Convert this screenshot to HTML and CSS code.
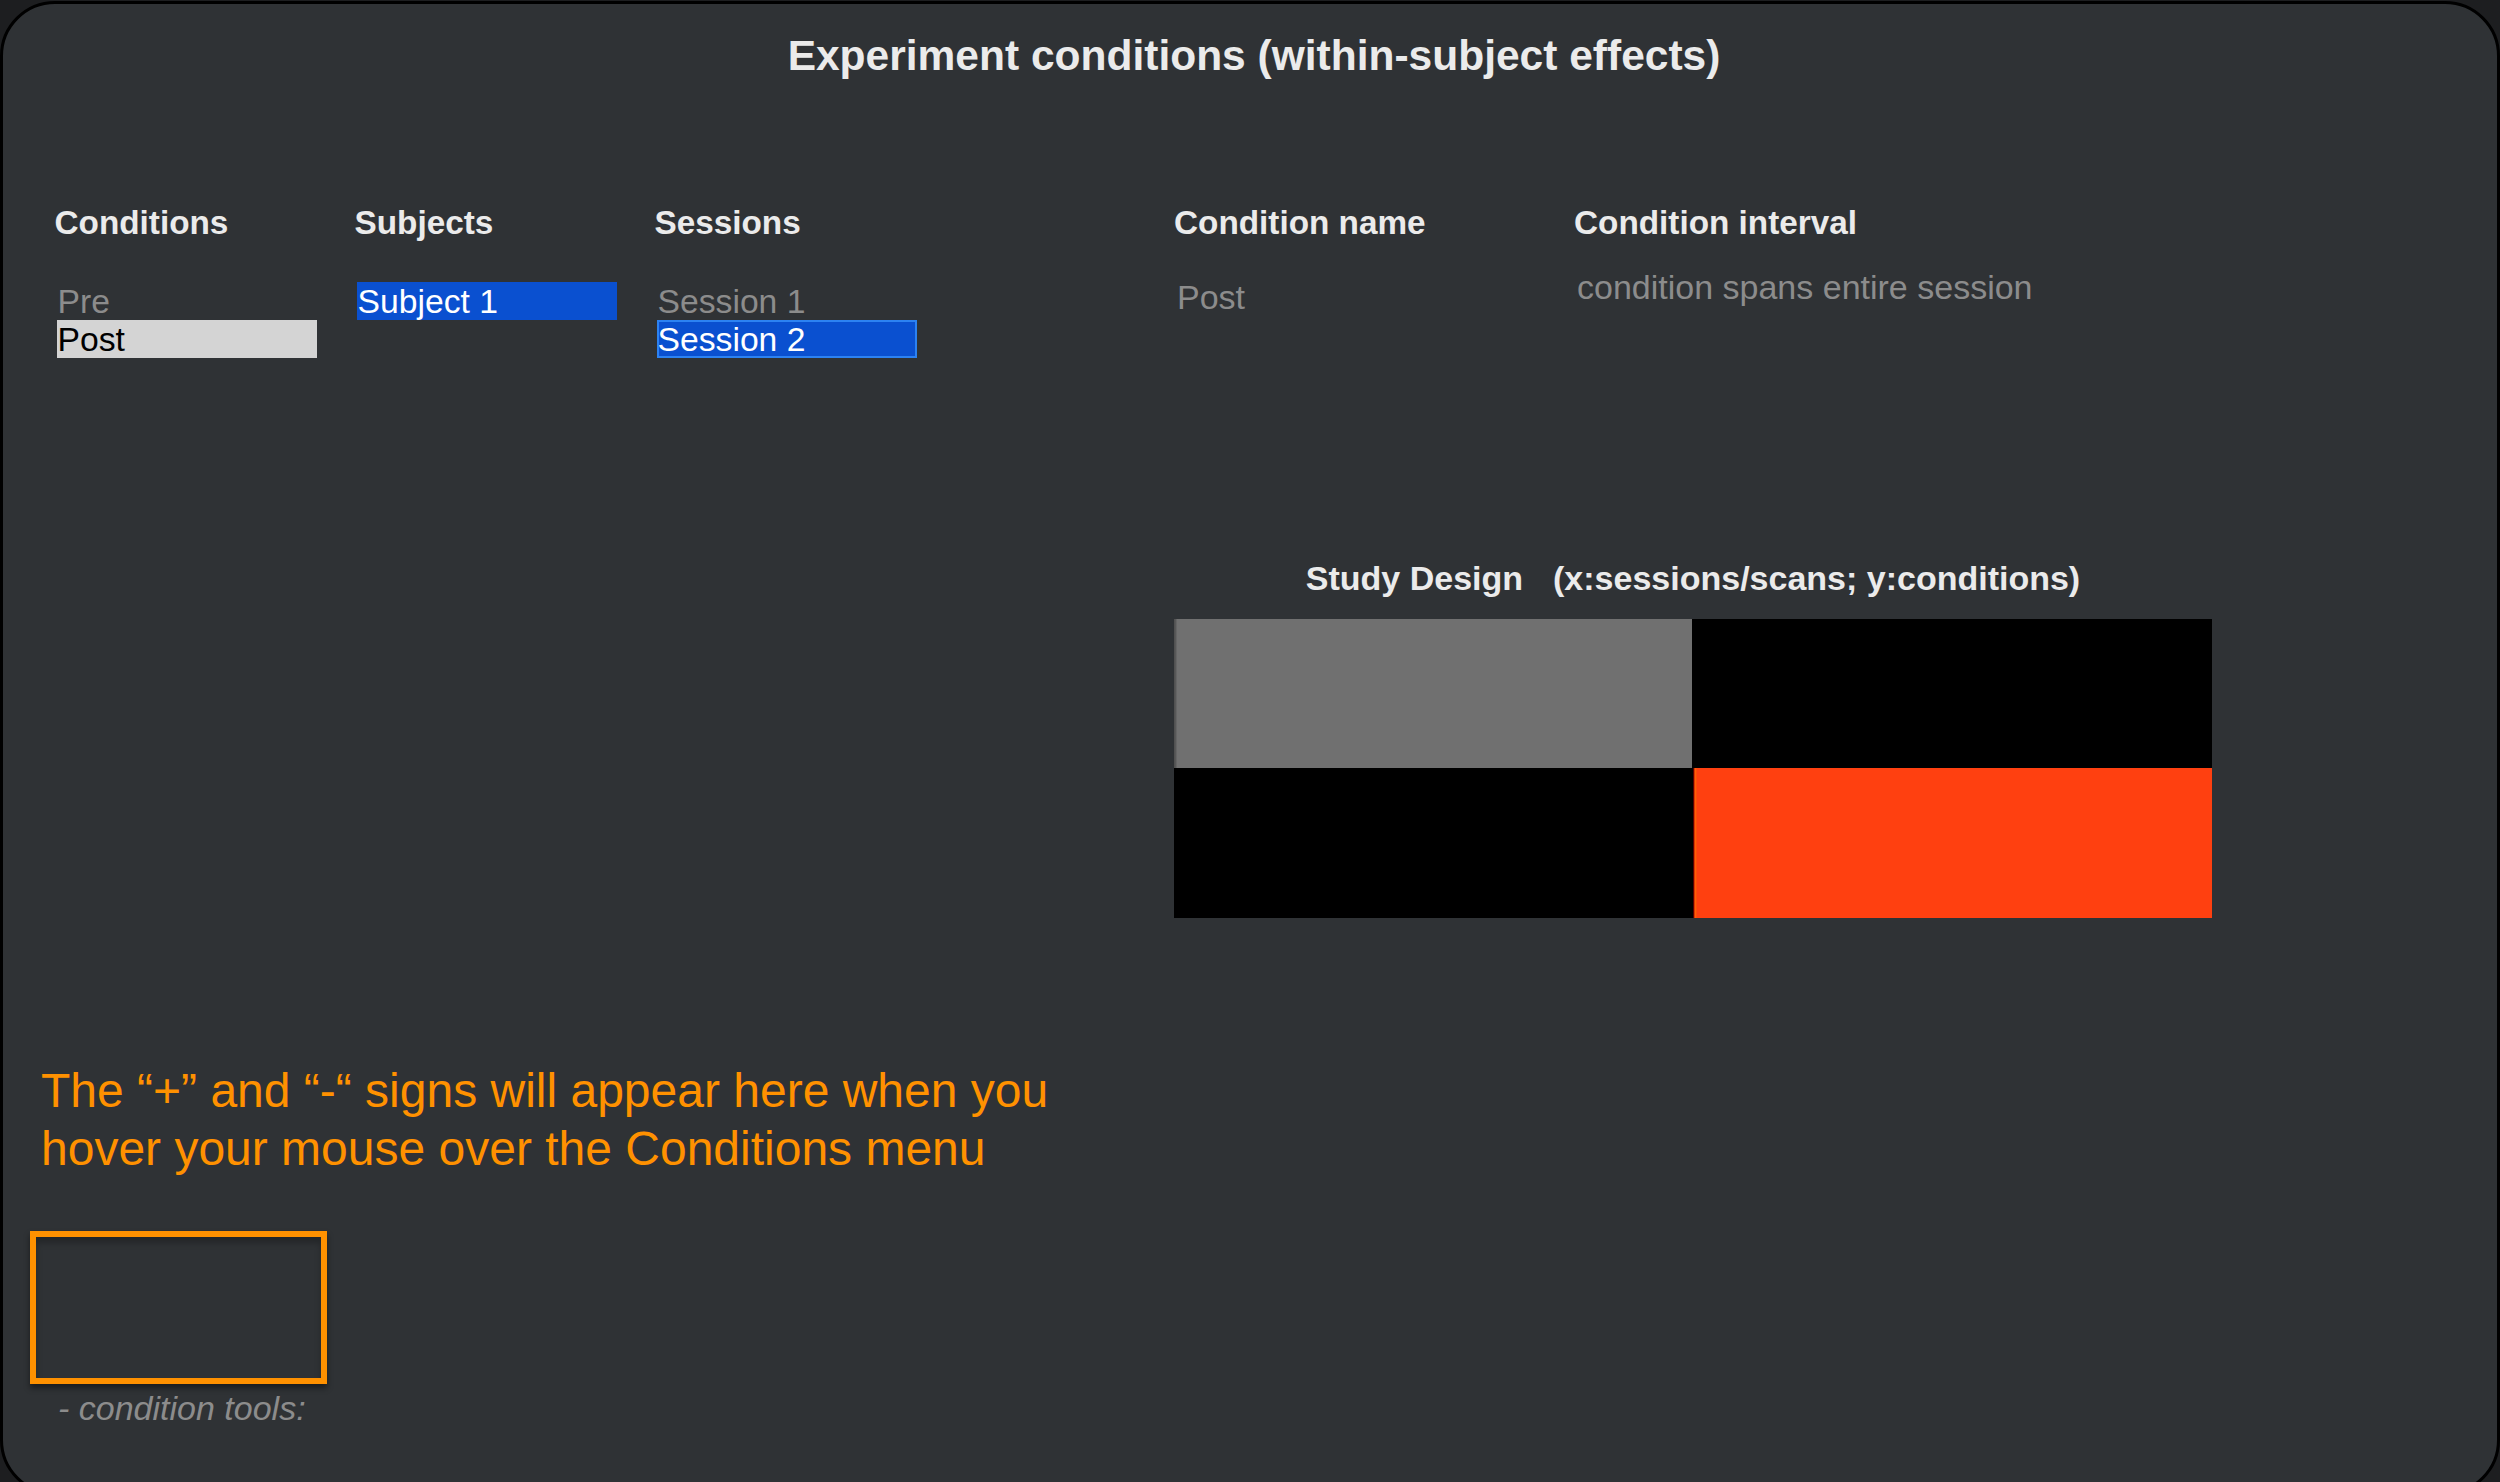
FILE: index.html
```html
<!DOCTYPE html>
<html lang="en">
<head>
<meta charset="utf-8">
<title>Experiment conditions</title>
<link rel="stylesheet" href="styles.css">
</head>
<body>
<div class="window">
  <h1 class="title">Experiment conditions (within-subject effects)</h1>
  <div class="body">
    <div class="left">
      <div class="lists">
        <div class="list-col">
          <h2 class="heading">Conditions</h2>
          <div class="item">Pre</div>
          <div class="item item-active">Post</div>
        </div>
        <div class="list-col">
          <h2 class="heading">Subjects</h2>
          <div class="item item-selected">Subject 1</div>
        </div>
        <div class="list-col">
          <h2 class="heading">Sessions</h2>
          <div class="item">Session 1</div>
          <div class="item item-selected item-focus">Session 2</div>
        </div>
      </div>
      <p class="hint">The “+” and “-“ signs will appear here when you<br>hover your mouse over the Conditions menu</p>
      <div class="tools-box"></div>
      <div class="tools-label">- condition tools:</div>
    </div>
    <div class="right">
      <div class="fields">
        <div class="field field-name">
          <h2 class="heading">Condition name</h2>
          <div class="value value-name">Post</div>
        </div>
        <div class="field field-interval">
          <h2 class="heading">Condition interval</h2>
          <div class="value value-interval">condition spans entire session</div>
        </div>
      </div>
      <div class="design">
        <div class="design-title"><span>Study Design</span><span>(x:sessions/scans; y:conditions)</span></div>
        <div class="design-grid">
          <div class="cell cell-gray"></div>
          <div class="cell cell-black"></div>
          <div class="cell cell-black"></div>
          <div class="cell cell-red"></div>
        </div>
      </div>
    </div>
  </div>
</div>
</body>
</html>
```
FILE: styles.css
```css
* { box-sizing: border-box; }
html, body { margin: 0; padding: 0; }
body {
  background: #1d1e20;
  font-family: "Liberation Sans", Arial, sans-serif;
  width: 2500px;
  height: 1482px;
  overflow: hidden;
}
.window {
  margin-top: 1px;
  width: 2500px;
  height: 1494px;
  border: 3px solid #000;
  border-radius: 55px;
  background: #2f3235;
  display: flex;
  flex-direction: column;
}
.title {
  margin: 0;
  padding: 28px 0 0 8px;
  font-size: 42.5px;
  line-height: 48px;
  font-weight: bold;
  color: #ebebeb;
  text-align: center;
  white-space: nowrap;
}
.body {
  display: flex;
  padding-top: 124px;
}
.left {
  width: 1171px;
  flex: none;
  display: flex;
  flex-direction: column;
}
.lists {
  display: flex;
  margin-left: 51.5px;
}
.list-col {
  width: 300px;
}
.heading {
  margin: 0 0 40px 0;
  font-size: 33.3px;
  line-height: 38px;
  font-weight: bold;
  color: #ebebeb;
  white-space: nowrap;
}
.item {
  width: 260px;
  height: 38px;
  margin-left: 2px;
  padding-left: 1px;
  font-size: 33.7px;
  line-height: 38px;
  color: #8c8c8c;
  white-space: nowrap;
}
.item-active {
  background: #d4d4d4;
  color: #000;
}
.item-selected {
  background: #0a50d0;
  color: #fff;
}
.item-focus {
  outline: 2px solid #2c82f2;
  outline-offset: -2px;
}
.hint {
  margin: 704px 0 0 38px;
  font-size: 48px;
  line-height: 58px;
  color: #ff9100;
  white-space: nowrap;
}
.tools-box {
  margin: 53px 0 0 27px;
  width: 297px;
  height: 153px;
  border: 6px solid #ff9100;
  box-shadow: 0 4px 6px rgba(0, 0, 0, 0.45), inset 0 6px 6px rgba(0, 0, 0, 0.25);
}
.tools-label {
  margin: 5px 0 0 55px;
  font-size: 34px;
  line-height: 38px;
  font-style: italic;
  color: #8c8c8c;
  white-space: nowrap;
}
.right {
  display: flex;
  flex-direction: column;
}
.fields {
  display: flex;
}
.field {
  width: 400px;
  flex: none;
}
.field .heading { margin-bottom: 0; }
.value {
  font-size: 34px;
  line-height: 38px;
  color: #8c8c8c;
  padding-left: 3px;
  white-space: nowrap;
}
.value-name { margin-top: 36px; }
.value-interval { margin-top: 26px; }
.design {
  margin-top: 242px;
  width: 1038px;
}
.design-title {
  display: flex;
  justify-content: center;
  gap: 30px;
  font-size: 34px;
  line-height: 40px;
  font-weight: bold;
  color: #ebebeb;
  white-space: nowrap;
}
.design-grid {
  margin-top: 21px;
  display: grid;
  grid-template-columns: 518px 520px;
  grid-template-rows: 149px 150px;
}
.cell-gray {
  background: linear-gradient(to right, #4e4e4e 0, #5a5a5a 2px, #707070 3px, #707070 100%);
}
.cell-black { background: #000; }
.cell-red {
  background: linear-gradient(to right, #000 0, #000 1px, #b00000 2px, #ff6a00 3px, #ff4010 5px, #ff4010 100%);
}
```
